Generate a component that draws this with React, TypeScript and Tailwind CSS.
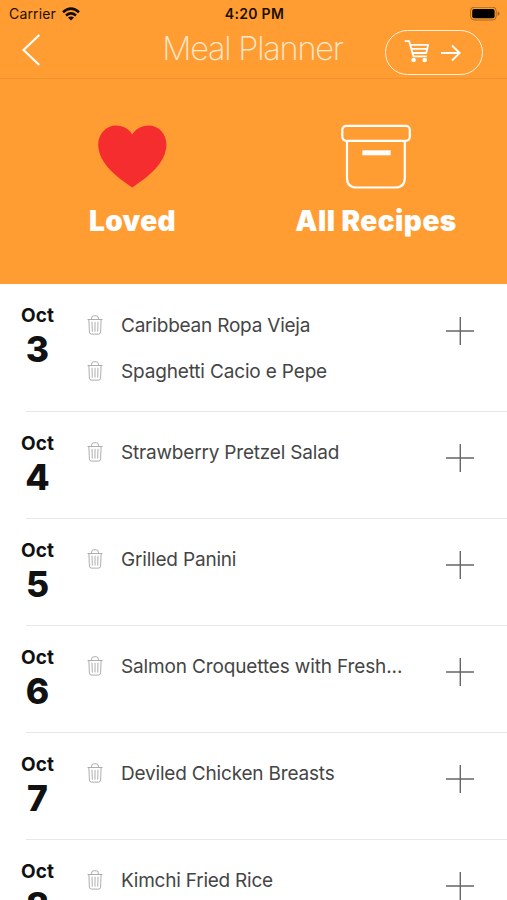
import React from "react";

type Day = { day: number; meals: { name: string; spacing: string }[] };

const days: Day[] = [
  {
    day: 3,
    meals: [
      { name: "Caribbean Ropa Vieja", spacing: "tracking-[-0.22px]" },
      { name: "Spaghetti Cacio e Pepe", spacing: "tracking-[-0.16px]" },
    ],
  },
  { day: 4, meals: [{ name: "Strawberry Pretzel Salad", spacing: "tracking-[-0.19px]" }] },
  { day: 5, meals: [{ name: "Grilled Panini", spacing: "tracking-[-0.19px]" }] },
  { day: 6, meals: [{ name: "Salmon Croquettes with Fresh...", spacing: "tracking-[-0.14px]" }] },
  { day: 7, meals: [{ name: "Deviled Chicken Breasts", spacing: "tracking-[-0.19px]" }] },
  { day: 8, meals: [{ name: "Kimchi Fried Rice", spacing: "tracking-[-0.23px]" }] },
];

function Trash() {
  return (
    <svg className="block h-5 w-4 shrink-0" viewBox="0 0 16 20" fill="none" stroke="#999" strokeWidth="0.8">
      <path d="M.5 4.5h15M4.600 4.300V3.200Q4.600.8 6.600.8h2.800q2 0 2 2.400v1.100" />
      <path d="M1.900 4.600l.5 12.400q.1 2.100 2.100 2.100h7q2 0 2.100-2.100l.5-12.400" />
      <path d="M5 6.800l.3 9.800M8 6.800v9.800M11 6.800l-.3 9.800" />
    </svg>
  );
}

function Plus() {
  return (
    <svg className="block size-7" viewBox="0 0 28 28" fill="none" stroke="#666" strokeWidth="1.4">
      <path d="M0 14h28M14.300 0v28" />
    </svg>
  );
}

function StatusBar() {
  return (
    <div className="grid h-[27px] grid-cols-3 items-center pl-[9px] pr-[7px] text-[14px] leading-none text-[#1c0f00]">
      <div className="flex items-center gap-[6px]">
        <span className="tracking-[0.15px]">Carrier</span>
        <svg className="h-[14px] w-[18px]" viewBox="0 0 18 14" fill="none" stroke="#160b00" strokeWidth="2.5">
          <path d="M1 5.200Q9-2 17 5.200M4 8.500q5-4.200 10 0" />
          <path d="M9 13.600l-3-3q3-2.400 6 0z" fill="#160b00" stroke="none" />
        </svg>
      </div>
      <span className="whitespace-nowrap text-center font-semibold tracking-[0.3px]">4:20 PM</span>
      <svg className="h-[14px] w-[30px] justify-self-end" viewBox="0 0 30 14">
        <rect x=".6" y=".2" width="25.6" height="12.8" rx="3.6" fill="none" stroke="#a5681f" strokeWidth="1" />
        <rect x="2.200" y="1.900" width="22.400" height="9.400" rx="2" fill="#000" />
        <path d="M27.600 4.200q2 .8 2 2.400t-2 2.400z" fill="#a5681f" />
      </svg>
    </div>
  );
}

function NavBar() {
  return (
    <div className="grid h-[52px] grid-cols-[1fr_auto_1fr] border-b border-[#ef922c] pl-[22px] pr-[24px]">
      <svg className="mt-[7px] h-8 w-[19px]" viewBox="0 0 19 32" fill="none" stroke="#fff" strokeWidth="2.2">
        <path d="M17.300 1L1.500 16l15.800 15" />
      </svg>
      <h1 className="mt-[2px] whitespace-nowrap text-[32.500px] font-extralight leading-[40px] tracking-[-1.200px] text-[#ffe9cf]">
        Meal Planner
      </h1>
      <button className="mt-[3px] flex h-[45px] w-[98px] items-center justify-self-end rounded-full border-[1.500px] border-[#fff0dc] pl-[18px]">
        <svg className="mb-[3px] h-[24px] w-[26px]" viewBox="0 0 26 24" fill="none" stroke="#fff" strokeWidth="1.8" strokeLinejoin="round">
          <path d="M.8 2.200h4.400l4.300 15.200h13.300M5.800 5.800h18.400l-2 8.200H8.300M7 9.800h16" />
          <circle cx="9.6" cy="21" r="2.3" fill="#fff" stroke="none" />
          <circle cx="20.7" cy="21" r="2.3" fill="#fff" stroke="none" />
        </svg>
        <svg className="ml-[11px] h-[18px] w-[20px]" viewBox="0 0 20 18" fill="none" stroke="#fff" strokeWidth="1.8">
          <path d="M0 9h18.500M11 1.500L18.700 9 11 16.500" />
        </svg>
      </button>
    </div>
  );
}

export default function App() {
  return (
    <main className="h-[900px] w-[507px] overflow-hidden bg-white font-['Inter','Liberation_Sans',sans-serif]">
      <header className="h-[284px] bg-[#ff9d33]">
        <StatusBar />
        <NavBar />
        <div className="grid grid-cols-[264px_1fr] pt-[45px] text-[28px] font-black leading-[34px] text-white">
          <div className="flex flex-col items-center">
            <svg className="h-[64px] w-[70px]" viewBox="0 0 70 64">
              <path
                d="M35.300 63.500C22 54.500 1.200 40 1.200 20.500C1.200 9.500 9.500 1.500 19 1.500C26.500 1.500 32 5 35.300 10.500C38.600 5 44.500 1.500 51.600 1.500C61.500 1.500 69.400 9.500 69.400 20.500C69.400 40 48.600 54.500 35.300 63.500Z"
                fill="#f52d2f"
              />
            </svg>
            <span className="mt-[16px] pl-[1px] tracking-[0.35px]">Loved</span>
          </div>
          <div className="flex flex-col items-center pr-[19px]">
            <svg className="h-[65px] w-[70px]" viewBox="0 0 70 65" fill="none" stroke="#fff" strokeWidth="2.2">
              <rect x="1.300" y="1.800" width="67.500" height="15" rx="4" />
              <path d="M6 16.800V53.700q0 9.800 9.800 9.800h38.200q9.800 0 9.800-9.800V16.800" />
              <path d="M21.300 28.800h28.400" strokeWidth="5" />
            </svg>
            <span className="mt-[15px] whitespace-nowrap tracking-[0.45px]">All Recipes</span>
          </div>
        </div>
      </header>
      <section>
        {days.map(({ day, meals }, index) => (
          <article key={day} className={index === 0 ? "h-[128px]" : "h-[107px]"}>
            <div className="grid h-full grid-cols-[75px_1fr_61px]">
              <div className="flex flex-col items-center pt-[20px] text-[#111]">
                <span className="text-[19px] font-bold leading-[24px]">Oct</span>
                <span className="text-[35.500px] font-extrabold leading-[44px]">{day}</span>
              </div>
              <div className={`flex flex-col gap-[22px] pl-[12px] ${index === 0 ? "pt-[29px]" : "pt-[28px]"}`}>
                {meals.map(({ name, spacing }) => (
                  <div key={name} className="flex h-6 items-center gap-[18px]">
                    <Trash />
                    <span className={`mt-px whitespace-nowrap text-[19px] leading-6 text-[#454545] ${spacing}`}>{name}</span>
                  </div>
                ))}
              </div>
              <div className={index === 0 ? "pt-[32.5px]" : "pt-[31.5px]"}>
                <Plus />
              </div>
            </div>
            <div className="-mt-px ml-[26px] h-px bg-[#e7e7e7]" />
          </article>
        ))}
      </section>
    </main>
  );
}
